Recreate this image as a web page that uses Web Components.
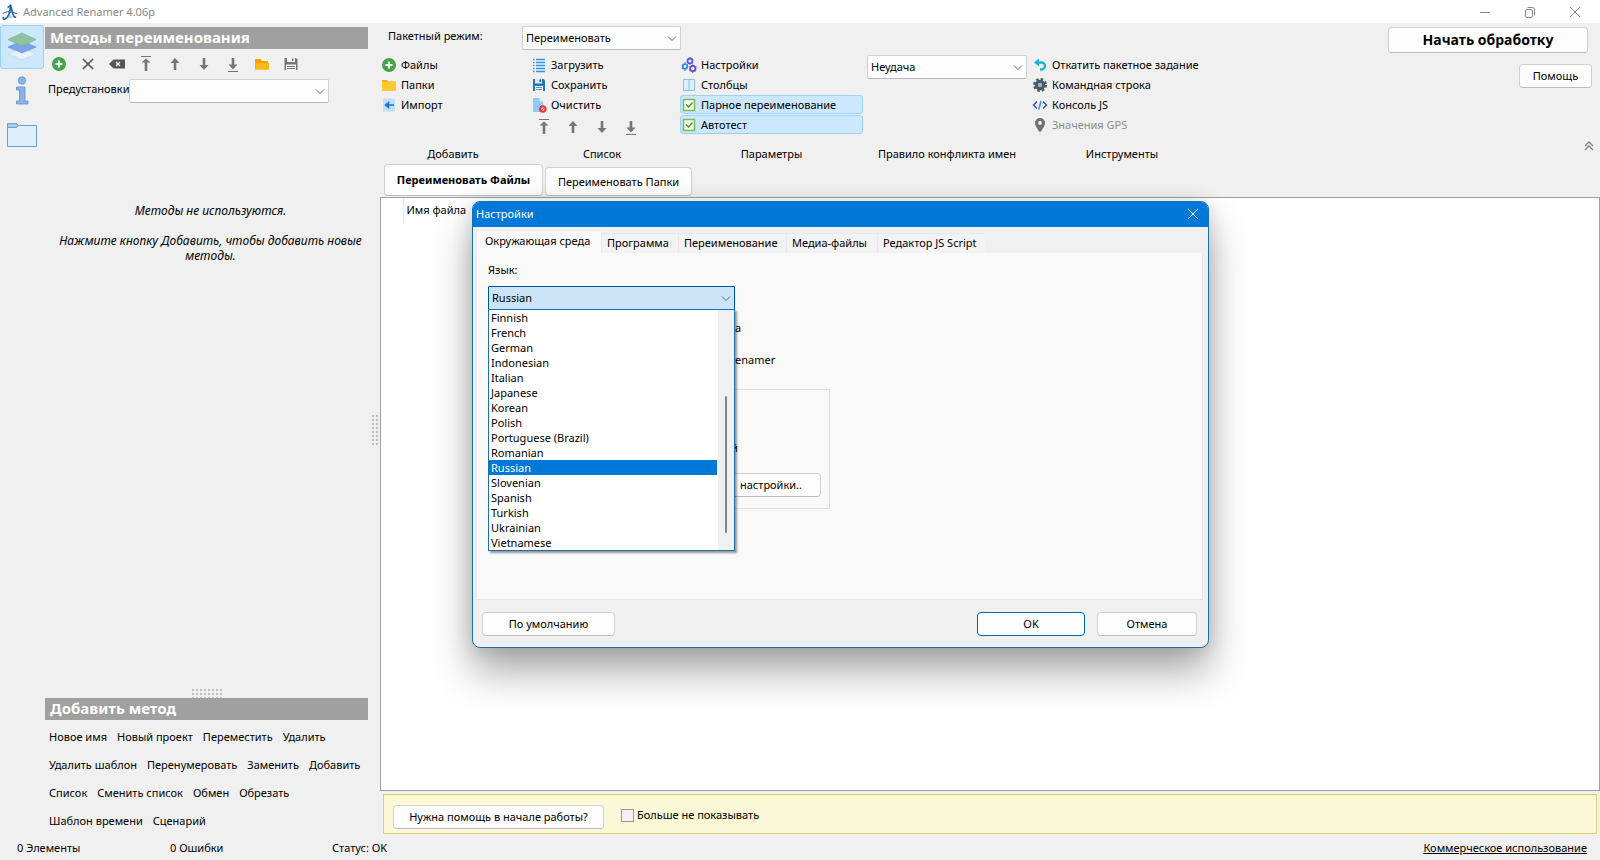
<!DOCTYPE html>
<html lang="ru">
<head>
<meta charset="utf-8">
<title>Advanced Renamer 4.06p</title>
<style>
  html, body { margin: 0; height: 100%; }
  body { font: 11px/16px "Noto Sans", "Open Sans", sans-serif; color: #000; background: #f0f0f0; overflow: hidden; }
</style>
</head>
<body>
<renamer-app></renamer-app>
<script>
/* Shared base: renders a template string into an open shadow root. */
class ViewElement extends HTMLElement {
  connectedCallback() {
    if (this.shadowRoot) return;
    this.attachShadow({ mode: 'open' }).innerHTML =
      `<style>*{box-sizing:border-box}button,select,input{font:inherit;color:inherit}button{cursor:default}[hidden]{display:none}${this.css()}</style>${this.html()}`;
  }
  css() { return ':host{display:block}'; }
  html() { return '<slot></slot>'; }
}

const arrow = d => `<svg viewBox="0 0 16 16" fill="none" stroke="#757575" stroke-width="2.6">${d}</svg>`;
const ICONS = {
  logo: '<svg viewBox="0 0 16 16" fill="none" stroke="#1f62a8" stroke-linecap="round"><path d="M5 14 8 10.500l3 3.500z" fill="#a7d5ea" stroke="none"/><path d="M1.500 13.500C0 16.500 5 15.500 7 10 8 7 8.500 4 8.500 1L11 10c.5 2.500 1.500 3.500 2.500 3" stroke-width="1.600"/><path d="M6 3.500 8.500 1" stroke-width="1.200"/><path d="M1 9.500C5 6.500 10 8 14.500 9.500" stroke-width="1"/></svg>',
  plus: '<svg viewBox="0 0 16 16"><circle cx="8" cy="8" r="7" fill="#43a548"/><path d="M8 4.500v7M4.500 8h7" stroke="#fff" stroke-width="2"/></svg>',
  cross: '<svg viewBox="0 0 16 16" fill="none" stroke="#555" stroke-width="1.700"><path d="m3 3 10 10M13 3 3 13"/></svg>',
  clear: '<svg viewBox="0 0 16 16"><path d="M0 8 4.500 3.500H16v9H4.500z" fill="#555"/><path d="m7 6 4 4M11 6l-4 4" stroke="#fff" stroke-width="1.200"/></svg>',
  top: arrow('<path d="M8 15V5"/><path d="M3.500 6.500 8 2.500l4.500 4z" fill="#757575" stroke="none"/><path d="M3 .5h10" stroke-width="1"/>'),
  up: arrow('<path d="M8 14V6"/><path d="M3.500 7 8 2l4.500 5z" fill="#757575" stroke="none"/>'),
  down: arrow('<path d="M8 2v8"/><path d="M3.500 9 8 14l4.500-5z" fill="#757575" stroke="none"/>'),
  bottom: arrow('<path d="M8 2v8"/><path d="M3.500 8.500 8 13.500l4.500-5z" fill="#757575" stroke="none"/><path d="M3 15.500h10" stroke-width="1"/>'),
  opened: '<svg viewBox="0 0 16 16"><path d="M1 3h6l1 2h6v8.500H1z" fill="#f9a100"/><path d="M2.500 7H15v6.500H1.500z" fill="#ffb914"/></svg>',
  floppy: '<svg viewBox="0 0 16 16"><path d="M1.500 2h11.500L14.500 3.500V14h-13z" fill="#757575"/><path d="M4 2h8v4H4zM3 8.500h10V14H3z" fill="#f4f4f4"/><path d="M9 2.500h1.500V5H9zM4 10h8v1H4zM4 12h8v1H4z" fill="#757575"/></svg>',
  folder: '<svg viewBox="0 0 16 16"><path d="M1 3h5l1.500 1.500H15v9H1z" fill="#f9a825"/><path d="M1 5h14v8.500H1z" fill="#ffc928"/></svg>',
  importIn: '<svg viewBox="0 0 16 16"><path d="M2 1.500h12v13H2z" fill="#c3def8"/><path d="M4 8h9M7.500 5.500 4.500 8l3 2.500z" fill="#1976d2" stroke="#1976d2" stroke-width="1.500"/></svg>',
  list: '<svg viewBox="0 0 16 16" stroke="#2f96e0" stroke-width="1.400"><path d="M2 2.500h1.500M5 2.500h9M2 5.500h1.500M5 5.500h9M2 8.500h1.500M5 8.500h9M2 11.500h1.500M5 11.500h9M2 14.500h1.500M5 14.500h9"/></svg>',
  save: '<svg viewBox="0 0 16 16"><path d="M2 2h10.500L14 3.500V14H2z" fill="#1f77c0"/><path d="M4 2h7v4.500H4z" fill="#d7ebf7"/><path d="M8.500 2.500H10V5H8.500z" fill="#1f577e"/><path d="M4 9h8v5H4z" fill="#fff"/><path d="M5 10.500h6M5 12.500h6" stroke="#1f77c0" stroke-width=".8"/></svg>',
  wipe: '<svg viewBox="0 0 16 16"><path d="M2 1h6.500L12 4.500V15H2z" fill="#90caf9"/><path d="M8.500 1 12 4.500H8.500z" fill="#e1f1fd"/><circle cx="11.800" cy="12" r="3.800" fill="#e53935"/><circle cx="11.800" cy="12" r="1.700" fill="#f8d6d5"/><path d="m10.300 13.500 3-3" stroke="#e53935"/></svg>',
  gears: '<svg viewBox="0 0 16 16" fill="none" stroke-width="1.800"><circle cx="9" cy="4" r="2.500" stroke="#5b57d2" /><circle cx="4" cy="9.500" r="2.300" stroke="#2790e0"/><circle cx="11.800" cy="11.500" r="2.700" stroke="#6c45c5"/><path d="M9 0v1.500M6 2l1 1M12 2l-1 1M12 6l-1-1M4 6V5M4 13v1M1 8l1 .7M1 12l1-1M11.800 8v-.8M11.800 15v1M8.500 9.500l1 .8M15.500 9.500l-1 .8M15 14l-1-.8M8.500 14l1-.8" stroke="#5f6fd6" stroke-width="1.200"/></svg>',
  columns: '<svg viewBox="0 0 16 16" fill="#dcefff" stroke="#8ebfe8"><path d="M2.500 2.500h11v11h-11zM8 2.500v11"/></svg>',
  checked: '<svg viewBox="0 0 16 16"><path d="M2.500 2.500h11v11h-11z" fill="#f3fbe9" stroke="#7dba55" stroke-width="1.600"/><path d="m5 7.500 2.500 2.500L11.500 5.500" fill="none" stroke="#5a8f3f" stroke-width="1.400"/></svg>',
  undo: '<svg viewBox="0 0 16 16"><path d="M4 5.500h5.500a3.500 3.500 0 0 1 0 7H8" fill="none" stroke="#1cb2cf" stroke-width="2.300"/><path d="M7 1.500v8L2 5.500z" fill="#1cb2cf"/></svg>',
  gear: '<svg viewBox="0 0 16 16" fill="none" stroke="#455a64"><circle cx="8" cy="8" r="3.700" stroke-width="3.200"/><circle cx="8" cy="8" r="6" stroke-width="2" stroke-dasharray="2.600 2.110"/><circle cx="8" cy="8" r="2.200" fill="#9fb0b8" stroke="none"/></svg>',
  code: '<svg viewBox="0 0 16 16" fill="none" stroke="#3949ab" stroke-width="1.400"><path d="M5 4.500 1.500 8 5 11.500M11 4.500 14.500 8 11 11.500"/><path d="m9 4-2.200 8.500" stroke="#2196f3"/></svg>',
  pin: '<svg viewBox="0 0 16 16"><path d="M8 1a5 5 0 0 0-5 5c0 3.500 5 9.500 5 9.500S13 9.500 13 6a5 5 0 0 0-5-5z" fill="#707070"/><circle cx="8" cy="6" r="1.900" fill="#f0f0f0"/></svg>',
  chevron: '<svg viewBox="0 0 16 16" fill="none" stroke="#666"><path d="m4 6.500 4 4 4-4"/></svg>',
  collapse: '<svg viewBox="0 0 16 16" fill="none" stroke="#808080" stroke-width="1.300"><path d="m4 8 4-4 4 4M4 12l4-4 4 4"/></svg>',
  minimize: '<svg viewBox="0 0 16 16" stroke="#888"><path d="M3 8.500h10"/></svg>',
  restore: '<svg viewBox="0 0 16 16" fill="none" stroke="#888"><rect x="3.500" y="5.500" width="7" height="8" rx="1.500"/><path d="M5.500 3.500h5a2 2 0 0 1 2 2v6"/></svg>',
  close: '<svg viewBox="0 0 16 16" fill="none" stroke="currentColor"><path d="m3 3 10 10M13 3 3 13"/></svg>',
  layers: '<svg viewBox="0 0 32 32"><path d="M2 23 16 17l14 6-14 6z" fill="#e9f2f7" stroke="#bccfdc" stroke-width=".6"/><path d="m2 16 14-6 14 6-14 6z" fill="#7da3e8" stroke="#5f86cc" stroke-width=".6"/><path d="M2 8.500 16 2l14 6.500-14 6.500z" fill="#8fc39b" stroke="#76a983" stroke-width=".6"/></svg>',
  info: '<svg viewBox="0 0 32 32" fill="#8ab3e8" stroke="#5f8fd0" stroke-width=".8"><circle cx="16" cy="5.500" r="3.700"/><path d="M10.500 12H19v14h3v3H10.500v-3h3V15h-3z"/></svg>',
  pane: '<svg viewBox="0 0 32 32" stroke="#6f9fce" fill="#ddeefc"><path d="M1.500 27.500V4.500h9l2 2h18v21z"/><path d="M1.500 8.500V4.500h9l1.500 2-1.500 2z" fill="#a9ccec"/></svg>'
};

customElements.define('app-icon', class extends ViewElement {
  css() { return ':host{display:inline-block;width:16px;height:16px;flex:none}svg{display:block;width:100%;height:100%}'; }
  html() { return ICONS[this.getAttribute('name')]; }
});

customElements.define('icon-button', class extends ViewElement {
  css() { return ':host{display:block}button{display:block;border:0;padding:0;background:none;height:16px}'; }
  html() { return `<button type="button" aria-label="${this.getAttribute('label')}"><app-icon name="${this.getAttribute('name')}"></app-icon></button>`; }
});

customElements.define('push-button', class extends ViewElement {
  css() { return `:host{display:block;height:24px}
    button{width:100%;height:100%;padding:0 9px 0 var(--pad-left,9px);border:1px solid #d0d0d0;border-bottom-color:#bcbcbc;border-radius:4px;background:#fdfdfd;white-space:nowrap}
    :host([primary]) button{border:1px solid #0067b8;outline:0}`; }
  html() { return '<button type="button"><slot></slot></button>'; }
});

customElements.define('drop-down', class extends ViewElement {
  css() { return `:host{display:block}label{display:flex;align-items:flex-start}
    .caption{flex:none;width:var(--caption,auto);overflow:hidden;white-space:nowrap;padding-top:var(--caption-top,0px)}
    .box{display:grid;flex:1;align-items:center}
    .box>*{grid-area:1/1}
    select{appearance:none;width:100%;height:24px;padding:0 20px 0 3px;border:1px solid #d0d0d0;border-bottom-color:#b8b8b8;border-radius:2px;background:#fdfdfd}
    app-icon{justify-self:end;margin-right:1px;pointer-events:none}
    :host([open]) select{background:#cce4f7;border:1px solid #005499;border-radius:1px}`; }
  html() {
    const c = this.getAttribute('caption'), v = this.getAttribute('value') || '';
    return `<label>${c ? `<span class="caption">${c}</span>` : ''}<span class="box"><select aria-label="${c || this.getAttribute('label')}"><option>${v}</option></select><app-icon name="chevron"></app-icon></span></label>`;
  }
});

customElements.define('tool-item', class extends ViewElement {
  css() { return `:host{display:block;height:20px}
    button{display:flex;align-items:center;gap:4px;width:100%;height:19px;padding:0;border:1px solid transparent;border-radius:3px;background:none;text-align:left;white-space:nowrap}
    :host([pressed]) button{background:#cce8ff;border-color:#99d1ff}
    :host([disabled]) button{color:#8c8c8c}`; }
  html() { return `<button type="button"${this.hasAttribute('disabled') ? ' disabled' : ''}><app-icon name="${this.getAttribute('icon')}"></app-icon><slot></slot></button>`; }
});

customElements.define('ribbon-group', class extends ViewElement {
  css() { return `:host{display:flex;flex-direction:column;flex:none;height:107px}
    .items{flex:1}.name{text-align:center;padding-right:var(--name-shift,0px)}`; }
  html() { return `<div class="items"><slot></slot></div><div class="name">${this.getAttribute('name')}</div>`; }
});

customElements.define('arrow-row', class extends ViewElement {
  css() { return ':host{display:flex;gap:13px}'; }
  html() { return '<icon-button name="top" label="В начало"></icon-button><icon-button name="up" label="Вверх"></icon-button><icon-button name="down" label="Вниз"></icon-button><icon-button name="bottom" label="В конец"></icon-button>'; }
});

customElements.define('section-bar', class extends ViewElement {
  css() { return ':host{display:block;height:22px;padding-left:5px;background:#a0a0a0;color:#fff;font-weight:700;font-size:15px;line-height:20px}'; }
});

customElements.define('title-bar', class extends ViewElement {
  css() { return `:host{display:flex;align-items:center;height:23px;flex:none;padding:0 17px 0 2px;background:#fff;color:#888}
    .t{flex:1;padding-left:5px}.w{display:flex;gap:29px}`; }
  html() { return '<app-icon name="logo"></app-icon><span class="t"><slot></slot></span><div class="w"><icon-button name="minimize" label="Свернуть"></icon-button><icon-button name="restore" label="Восстановить"></icon-button><icon-button name="close" label="Закрыть"></icon-button></div>'; }
});

customElements.define('side-rail', class extends ViewElement {
  css() { return `:host{display:flex;flex-direction:column;width:45px;flex:none;padding-top:2px}
    button{width:44px;height:44px;padding:5px;border:1px solid transparent;border-radius:3px;background:none}
    button.on{background:#cce8ff;border-color:#99d1ff}
    app-icon{width:32px;height:32px}`; }
  html() { return '<button class="on" aria-label="Методы"><app-icon name="layers"></app-icon></button><button aria-label="Сведения"><app-icon name="info"></app-icon></button><button aria-label="Папки"><app-icon name="pane"></app-icon></button>'; }
});

customElements.define('drag-dots', class extends ViewElement {
  css() { return `:host{display:block;width:30px;height:9px;background:radial-gradient(circle at 1px 1px,#bbb 1px,transparent 1px) 0 0/4px 4px}
    :host([vertical]){width:8px;height:32px}`; }
});

customElements.define('methods-panel', class extends ViewElement {
  css() { return `:host{display:flex;flex-direction:column;width:323px;flex:none;padding-top:4px}
    .tools{display:flex;gap:13px;padding:7px 0 7px 6px}
    drop-down{width:281px;margin-left:3px;--caption:81px;--caption-top:2px}
    .empty{flex:1;padding:100px 0 0 8px;text-align:center;font-style:italic;font-size:12px;line-height:15px}
    .empty p{margin:0 0 15px}
    drag-dots{align-self:center}
    nav{display:flex;flex-direction:column;gap:12px;padding:9px 0 5px 4px}
    nav div{display:flex;gap:10px}
    a{color:#000;text-decoration:none;white-space:nowrap}`; }
  html() {
    const rows = [['Новое имя', 'Новый проект', 'Переместить', 'Удалить'], ['Удалить шаблон', 'Перенумеровать', 'Заменить', 'Добавить'], ['Список', 'Сменить список', 'Обмен', 'Обрезать'], ['Шаблон времени', 'Сценарий']];
    const tools = [['plus', 'Добавить'], ['cross', 'Удалить'], ['clear', 'Очистить'], ['top', 'В начало'], ['up', 'Вверх'], ['down', 'Вниз'], ['bottom', 'В конец'], ['opened', 'Открыть'], ['floppy', 'Сохранить']];
    return `<section-bar>Методы переименования</section-bar>
      <div class="tools">${tools.map(t => `<icon-button name="${t[0]}" label="${t[1]}"></icon-button>`).join('')}</div>
      <drop-down caption="Предустановки"></drop-down>
      <div class="empty"><p>Методы не используются.</p><p>Нажмите кнопку Добавить, чтобы добавить новые<br>методы.</p></div>
      <drag-dots></drag-dots>
      <section-bar>Добавить метод</section-bar>
      <nav>${rows.map(r => `<div>${r.map(t => `<a href="#">${t}</a>`).join('')}</div>`).join('')}</nav>`;
  }
});

customElements.define('ribbon-bar', class extends ViewElement {
  css() { return `:host{display:flex;flex:none;height:141px}
    .left{flex:1;padding-top:3px}
    .mode{width:293px;margin-left:8px;--caption:134px;--caption-top:2px}
    .groups{display:flex;padding-top:5px}
    .add{width:150px;--name-shift:4px}.list{width:150px;--name-shift:6px}.opts{width:183px}.rule{width:168px}.rule drop-down{width:160px;margin-left:4px}.tools{width:190px;--name-shift:8px}
    .list arrow-row{padding:4px 0 0 6px}
    .right{display:flex;flex-direction:column;align-items:flex-end;width:220px;padding:4px 8px 0 0}
    .start{width:200px;height:26px;font-weight:700;font-size:14px;margin-right:4px}
    .help{width:73px;margin-top:11px}
    .right icon-button{margin:50px -5px 0 0}`; }
  html() { return `<div class="left">
      <drop-down class="mode" caption="Пакетный режим:" value="Переименовать"></drop-down>
      <div class="groups">
        <ribbon-group class="add" name="Добавить"><tool-item icon="plus">Файлы</tool-item><tool-item icon="folder">Папки</tool-item><tool-item icon="importIn">Импорт</tool-item></ribbon-group>
        <ribbon-group class="list" name="Список"><tool-item icon="list">Загрузить</tool-item><tool-item icon="save">Сохранить</tool-item><tool-item icon="wipe">Очистить</tool-item><arrow-row></arrow-row></ribbon-group>
        <ribbon-group class="opts" name="Параметры"><tool-item icon="gears">Настройки</tool-item><tool-item icon="columns">Столбцы</tool-item><tool-item icon="checked" pressed>Парное переименование</tool-item><tool-item icon="checked" pressed>Автотест</tool-item></ribbon-group>
        <ribbon-group class="rule" name="Правило конфликта имен"><drop-down label="Правило конфликта имен" value="Неудача"></drop-down></ribbon-group>
        <ribbon-group class="tools" name="Инструменты"><tool-item icon="undo">Откатить пакетное задание</tool-item><tool-item icon="gear">Командная строка</tool-item><tool-item icon="code">Консоль JS</tool-item><tool-item icon="pin" disabled>Значения GPS</tool-item></ribbon-group>
      </div></div>
      <div class="right"><push-button class="start">Начать обработку</push-button><push-button class="help">Помощь</push-button><icon-button name="collapse" label="Свернуть панель"></icon-button></div>`; }
});

customElements.define('file-area', class extends ViewElement {
  css() { return `:host{display:flex;flex-direction:column;flex:1;min-width:0}
    .tabs{display:flex;align-items:flex-end;gap:2px;padding:0 0 1px 4px;height:33px}
    .tabs push-button{height:29px;width:147px}
    .tabs .on{height:32px;width:159px;font-weight:700}
    .list{flex:1;border:1px solid #a0a0a0;background:#fff}
    table{border-collapse:collapse}
    th{padding:4px 0 5px 3px;text-align:left;font-weight:400;border-left:1px solid #e5e5e5}
    th:first-child{width:22px;border:0}
    .hint{display:flex;align-items:center;margin:3px 3px 0 3px;height:40px;padding:5px 9px 0;border:1px solid #e0cf66;background:#fbf8d8}
    .hint push-button{width:211px;margin-right:17px}
    .hint label{display:flex;align-items:center;gap:3px;margin-top:-3px}
    input{appearance:none;width:13px;height:13px;margin:0;border:1px solid #999;background:#f4f1f4}`; }
  html() { return `<ribbon-bar></ribbon-bar>
    <div class="tabs"><push-button class="on">Переименовать Файлы</push-button><push-button>Переименовать Папки</push-button></div>
    <div class="list"><table><thead><tr><th></th><th>Имя файла</th></tr></thead></table></div>
    <div class="hint"><push-button>Нужна помощь в начале работы?</push-button><label><input type="checkbox">Больше не показывать</label></div>`; }
});

customElements.define('status-bar', class extends ViewElement {
  css() { return `:host{display:flex;flex:none;height:26px;padding:6px 13px 0 17px}
    span{width:153px}span+span{width:162px}span+span+span{flex:1}a{color:#000}`; }
  html() { return '<span>0 Элементы</span><span>0 Ошибки</span><span>Статус: OK</span><a href="#">Коммерческое использование</a>'; }
});

customElements.define('language-list', class extends ViewElement {
  css() { return `:host{display:flex;height:242px;border:1px solid #1a6fae;background:#fff;box-shadow:2px 2px 2px #0006}
    ul{flex:1;margin:0;padding:0;list-style:none;line-height:15px}
    li{height:15px;padding-left:2px}
    li[aria-selected=true]{background:#0078d7;color:#fff}
    .track{width:16px;margin-left:1px;background:#f0f0f0;padding:86px 0 0 7px}
    .thumb{width:2px;height:137px;border-radius:1px;background:#858585}`; }
  html() {
    const names = ['Finnish', 'French', 'German', 'Indonesian', 'Italian', 'Japanese', 'Korean', 'Polish', 'Portuguese (Brazil)', 'Romanian', 'Russian', 'Slovenian', 'Spanish', 'Turkish', 'Ukrainian', 'Vietnamese'];
    return `<ul role="listbox" aria-label="Язык">${names.map(n => `<li role="option" aria-selected="${n === 'Russian'}">${n}</li>`).join('')}</ul><div class="track"><div class="thumb"></div></div>`;
  }
});

customElements.define('settings-dialog', class extends ViewElement {
  css() { return `:host{display:flex;flex-direction:column;width:737px;border:1px solid #1a6fae;border-radius:8px;overflow:hidden;background:#f0f0f0}
    header{display:flex;align-items:center;justify-content:space-between;height:25px;padding:0 7px 1px 3px;background:#0078d7;color:#fff}
    .tabs{display:flex;align-items:flex-end;height:26px;padding-left:3px}
    .tabs button{height:20px;padding:0 0 1px 5px;border:1px solid #e9e9e9;border-width:1px 0 0 1px;background:#f3f3f3;white-space:nowrap;text-align:left}
    .tabs .on{height:23px;background:#f9f9f9;width:125px;padding:0 0 2px 8px}
    .page{position:relative;margin:0 5px 0 3px;height:347px;padding:9px 11px;border:1px solid #e6e6e6;border-top:0;background:#f9f9f9}
    .field{width:247px}
    .caption{display:block;height:24px}
    language-list{position:absolute;left:11px;top:56px;width:247px}
    .row{display:block;padding-left:247px;height:32px}
    .rows{padding-top:10px}
    fieldset{margin:5px 0 0;width:342px;height:120px;border:1px solid #dcdcdc;display:flex;flex-direction:column;padding:50px 8px 0 0;gap:17px;align-items:flex-end}
    fieldset span{width:90px}
    fieldset push-button{width:160px;--pad-left:69px}
    footer{display:flex;padding:12px 11px 11px 9px}
    footer push-button{width:133px;height:24px}
    footer .ok{margin-left:auto;width:108px}
    footer .cancel{margin-left:12px;width:100px}`; }
  html() { return `<header><span>Настройки</span><icon-button name="close" label="Закрыть"></icon-button></header>
    <div class="tabs" role="tablist"><button class="on" role="tab">Окружающая среда</button><button role="tab" style="width:77px">Программа</button><button role="tab" style="width:108px">Переименование</button><button role="tab" style="width:91px">Медиа-файлы</button><button role="tab" style="width:108px">Редактор JS Script</button></div>
    <div class="page"><span class="caption">Язык:</span><drop-down class="field" open label="Язык" value="Russian"></drop-down>
      <div class="rows"><span class="row">а</span><span class="row">enamer</span></div>
      <fieldset><span>й</span><push-button>настройки..</push-button></fieldset>
      <language-list></language-list></div>
    <footer><push-button>По умолчанию</push-button><push-button class="ok" primary>OK</push-button><push-button class="cancel">Отмена</push-button></footer>`; }
});

customElements.define('renamer-app', class extends ViewElement {
  css() { return `:host{display:flex;flex-direction:column;height:100vh;position:relative}
    .body{display:flex;flex:1;min-height:0}
    .split{width:12px;flex:none;display:flex;align-items:center;justify-content:flex-end;padding-top:4px}
    settings-dialog{position:absolute;left:472px;top:201px;box-shadow:0 24px 40px #0005,0 2px 20px #0002}`; }
  html() { return `<title-bar>Advanced Renamer 4.06p</title-bar>
    <div class="body"><side-rail></side-rail><methods-panel></methods-panel><div class="split"><drag-dots vertical></drag-dots></div><file-area></file-area></div>
    <status-bar></status-bar><settings-dialog></settings-dialog>`; }
});
</script>
</body>
</html>
